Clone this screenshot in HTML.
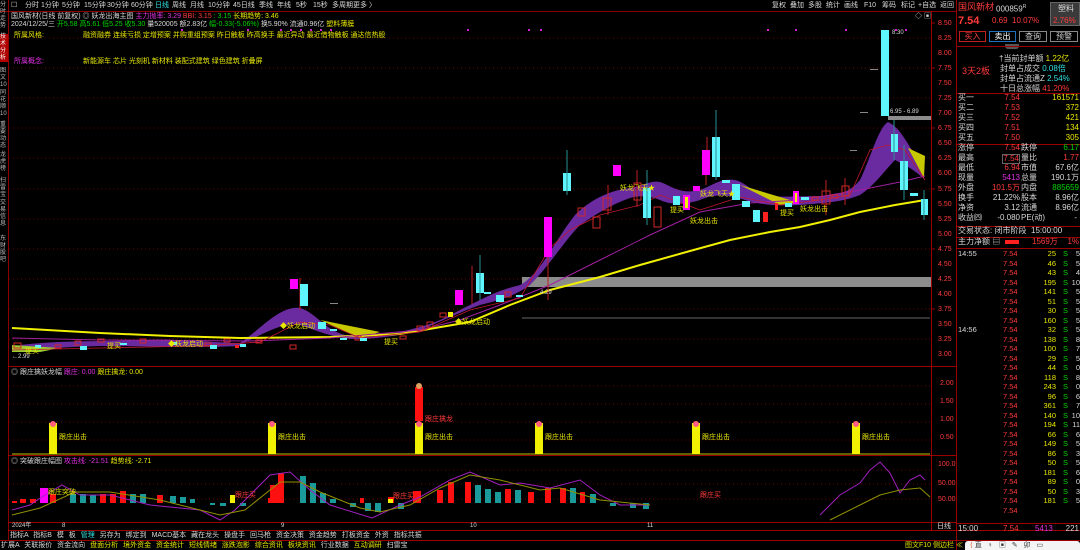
<!DOCTYPE html>
<html><head><meta charset="utf-8">
<style>
*{margin:0;padding:0;box-sizing:border-box}
body{width:1080px;height:550px;background:#000;overflow:hidden;position:relative;font-family:"Liberation Sans","Noto Sans CJK SC",sans-serif;font-size:7px;color:#c8c8c8}
.a{position:absolute;white-space:nowrap;line-height:1}
.y{color:#e6e600}.r{color:#ff3a3a}.g{color:#00d400}.m{color:#e030e0}.c{color:#30e0e0}.w{color:#d8d8d8}
.rp{position:absolute;left:957px;width:123px;font-size:8px}
.row{position:absolute;left:0;width:123px;height:10px;line-height:10px;white-space:nowrap}
.row span{position:absolute}
.mv{right:60px}
.l2{left:64px}
</style></head><body>
<svg width="1080" height="550" style="position:absolute;left:0;top:0">
<rect x="0" y="0" width="8" height="550" fill="#000"/>
<line x1="8.5" y1="0" x2="8.5" y2="540" stroke="#8a0000"/>
<line x1="0" y1="11.5" x2="957" y2="11.5" stroke="#8a0000"/>
<line x1="931.5" y1="11" x2="931.5" y2="530" stroke="#9a0000"/>
<line x1="956.5" y1="0" x2="956.5" y2="550" stroke="#9a0000"/>
<line x1="8" y1="366.5" x2="956" y2="366.5" stroke="#9a0000"/>
<line x1="8" y1="455.5" x2="956" y2="455.5" stroke="#9a0000"/>
<line x1="8" y1="522.5" x2="956" y2="522.5" stroke="#9a0000"/>
<line x1="8" y1="530.5" x2="1080" y2="530.5" stroke="#9a0000"/>
<line x1="0" y1="540.5" x2="1080" y2="540.5" stroke="#9a0000"/>
<g stroke="#6a0000" stroke-dasharray="1 3">
<line x1="9" y1="38" x2="930" y2="38"/><line x1="9" y1="68" x2="930" y2="68"/><line x1="9" y1="98" x2="930" y2="98"/><line x1="9" y1="128" x2="930" y2="128"/><line x1="9" y1="158" x2="930" y2="158"/><line x1="9" y1="189" x2="930" y2="189"/><line x1="9" y1="219" x2="930" y2="219"/><line x1="9" y1="249" x2="930" y2="249"/><line x1="9" y1="279" x2="930" y2="279"/><line x1="9" y1="309" x2="930" y2="309"/><line x1="9" y1="339" x2="930" y2="339"/>
<line x1="9" y1="386" x2="930" y2="386"/><line x1="9" y1="404" x2="930" y2="404"/><line x1="9" y1="422" x2="930" y2="422"/><line x1="9" y1="440" x2="930" y2="440"/>
<line x1="9" y1="470" x2="930" y2="470"/><line x1="9" y1="484" x2="930" y2="484"/><line x1="9" y1="499" x2="930" y2="499"/>
</g>
<g stroke="#9a0000">
<line x1="931" y1="23" x2="935" y2="23"/><line x1="931" y1="68" x2="935" y2="68"/><line x1="931" y1="128" x2="935" y2="128"/><line x1="931" y1="189" x2="935" y2="189"/><line x1="931" y1="249" x2="935" y2="249"/><line x1="931" y1="309" x2="935" y2="309"/>
</g>
<rect x="522" y="277" width="409" height="10" fill="#8c8c8c"/>
<rect x="888" y="116" width="43" height="4" fill="#8c8c8c"/>
<line x1="522" y1="318" x2="930" y2="318" stroke="#888" stroke-width="0.7"/>
<path d="M240,343 C260,330 280,305 300,308 C315,312 325,330 345,335 L360,336 C380,338 400,332 420,327 C440,322 455,312 470,305 C490,295 500,290 520,285 C540,275 555,240 575,215 C590,200 610,190 630,188 C640,187 650,180 660,182 C670,185 680,195 700,190 C712,186 720,178 735,180 C745,182 752,192 765,195 C780,198 800,196 820,196 C840,195 850,192 860,180 C870,160 878,128 888,122 C900,128 905,140 912,150 L925,180 C915,170 905,165 895,160 C885,170 875,185 860,195 C840,203 820,203 800,205 C780,206 760,205 745,200 C730,195 715,193 700,200 C685,205 670,205 660,200 C650,196 640,195 630,198 C610,205 595,215 580,225 C565,240 550,265 530,285 C515,296 500,300 480,305 C460,312 440,322 420,330 C400,336 380,338 360,339 C340,340 320,332 300,325 C285,322 270,330 240,345 Z" fill="#6a2aa0"/>
<path d="M20,345 C60,340 100,342 140,340 C180,338 210,343 240,343 L240,346 C200,348 150,346 100,346 C60,347 30,350 20,350Z" fill="#6a2aa0"/>
<path d="M320,320 L380,332 L360,338 Z" fill="#c8c800"/>
<path d="M740,185 L800,203 L780,205 Z" fill="#c8c800"/>
<path d="M908,148 L925,156 L924,178 Z" fill="#c8c800"/>
<path d="M12,345 L60,348 L40,352 L12,352Z" fill="#9acd32"/>
<polyline fill="none" stroke="#f0f000" stroke-width="2" points="12,328 100,333 170,336 240,338 330,337 400,334 470,322 510,305 550,290 600,277 640,265 690,251 730,240 770,232 800,227 830,220 860,212 895,205 925,200"/>
<polyline fill="none" stroke="#a020a0" stroke-width="1" points="12,338 100,340 250,341 330,338 420,330 460,320 500,305 550,285 600,260 650,235 700,212 750,203 800,200 860,190 900,182 925,176"/>
<polyline fill="none" stroke="#c01830" stroke-width="0.8" points="12,350 100,348 200,346 260,342 300,322 330,325 360,338 420,332 470,310 520,298 550,248 570,230 600,215 640,205 660,195 700,210 740,197 780,205 820,200 850,195 870,150 888,145 905,150 925,180"/>
<g stroke="#d02828" fill="none" stroke-width="1">
<rect x="14" y="343" width="7" height="5"/><rect x="55" y="345" width="6" height="3"/><rect x="75" y="341" width="6" height="4"/><rect x="98" y="339" width="6" height="3"/><rect x="140" y="339" width="6" height="4"/><rect x="205" y="343" width="6" height="3"/><rect x="224" y="339" width="6" height="3"/><rect x="256" y="340" width="6" height="3"/><rect x="290" y="345" width="6" height="4"/>
<rect x="355" y="336" width="6" height="4"/><rect x="400" y="336" width="6" height="3"/><rect x="417" y="326" width="6" height="5"/><rect x="427" y="322" width="6" height="5"/><rect x="440" y="313" width="6" height="4"/>
<rect x="505" y="292" width="6" height="5"/><rect x="578" y="208" width="7" height="8"/><rect x="593" y="217" width="7" height="11"/><rect x="603" y="198" width="8" height="12"/><rect x="634" y="183" width="7" height="17"/><rect x="654" y="207" width="7" height="20"/>
<rect x="812" y="197" width="6" height="3"/><rect x="822" y="191" width="8" height="13"/><rect x="832" y="195" width="6" height="3"/><rect x="842" y="186" width="7" height="10"/>
</g>
<g stroke="#c02020" stroke-width="1">
<line x1="300" y1="278" x2="300" y2="310"/><line x1="472" y1="266" x2="472" y2="304"/><line x1="548" y1="255" x2="548" y2="300"/><line x1="608" y1="185" x2="608" y2="215"/><line x1="637" y1="170" x2="637" y2="207"/><line x1="706" y1="168" x2="706" y2="185"/><line x1="707" y1="137" x2="707" y2="150"/><line x1="826" y1="180" x2="826" y2="215"/><line x1="845" y1="178" x2="845" y2="205"/>
</g>
<g fill="#ff00ff">
<rect x="290" y="279" width="8" height="10"/><rect x="455" y="290" width="8" height="15"/><rect x="544" y="217" width="8" height="40"/><rect x="613" y="165" width="8" height="11"/><rect x="702" y="150" width="8" height="25"/><rect x="693" y="186" width="7" height="5"/><rect x="683" y="195" width="7" height="15"/><rect x="793" y="191" width="6" height="13"/>
</g>
<rect x="685" y="197" width="3" height="11" fill="#f0f000"/><rect x="795" y="193" width="2" height="9" fill="#f0f000"/>
<rect x="448" y="312" width="5" height="5" fill="#f0f000"/>
<g fill="#5ff5ff">
<rect x="35" y="345" width="6" height="3"/><rect x="80" y="346" width="7" height="4"/><rect x="120" y="343" width="7" height="2"/><rect x="170" y="342" width="7" height="3"/><rect x="210" y="345" width="7" height="4"/><rect x="240" y="344" width="6" height="3"/>
<rect x="300" y="284" width="8" height="22"/><rect x="318" y="322" width="8" height="7"/><rect x="330" y="329" width="7" height="2"/><rect x="340" y="338" width="7" height="2"/><rect x="360" y="338" width="7" height="3"/>
<rect x="476" y="273" width="8" height="20"/><rect x="484" y="292" width="7" height="2"/><rect x="496" y="295" width="8" height="7"/><rect x="516" y="295" width="7" height="2"/>
<rect x="563" y="173" width="8" height="18"/><rect x="643" y="188" width="8" height="30"/><rect x="673" y="196" width="7" height="9"/><rect x="712" y="137" width="8" height="40"/><rect x="722" y="180" width="8" height="3"/><rect x="732" y="184" width="8" height="16"/><rect x="742" y="201" width="8" height="6"/><rect x="753" y="210" width="7" height="12"/><rect x="785" y="203" width="7" height="4"/><rect x="801" y="197" width="8" height="3"/>
<rect x="881" y="30" width="8" height="86"/><rect x="891" y="134" width="7" height="18"/><rect x="900" y="161" width="8" height="29"/><rect x="910" y="193" width="8" height="3"/><rect x="921" y="199" width="7" height="16"/>
</g>
<g stroke="#2a9090" stroke-width="1">
<line x1="567" y1="150" x2="567" y2="195"/><line x1="647" y1="170" x2="647" y2="225"/><line x1="716" y1="110" x2="716" y2="180"/><line x1="894" y1="120" x2="894" y2="160"/><line x1="904" y1="145" x2="904" y2="200"/><line x1="924" y1="190" x2="924" y2="220"/><line x1="480" y1="255" x2="480" y2="300"/>
</g>
<rect x="763" y="212" width="5" height="10" fill="#ff2020"/><rect x="775" y="203" width="3" height="7" fill="#ff2020"/><rect x="235" y="345" width="4" height="3" fill="#ff2020"/>
<g fill="#888"><rect x="330" y="303" width="8" height="1"/><rect x="870" y="69" width="8" height="1"/><rect x="860" y="112" width="8" height="1"/><rect x="850" y="150" width="7" height="1"/></g>
<g fill="#d020d0"><rect x="181" y="29" width="2" height="2"/><rect x="247" y="29" width="2" height="2"/><rect x="280" y="29" width="2" height="2"/><rect x="290" y="29" width="2" height="2"/><rect x="300" y="29" width="2" height="2"/><rect x="310" y="29" width="2" height="2"/><rect x="320" y="29" width="2" height="2"/><rect x="330" y="29" width="2" height="2"/><rect x="467" y="29" width="2" height="2"/><rect x="528" y="29" width="2" height="2"/><rect x="540" y="29" width="2" height="2"/><rect x="845" y="29" width="2" height="2"/><rect x="895" y="29" width="2" height="2"/><rect x="905" y="29" width="2" height="2"/><rect x="767" y="29" width="2" height="2"/><rect x="795" y="29" width="2" height="2"/></g>
<line x1="12" y1="454" x2="930" y2="454" stroke="#808000" stroke-width="1.5"/>
<g fill="#f0f000"><rect x="49" y="423" width="8" height="31"/><rect x="268" y="423" width="8" height="31"/><rect x="415" y="423" width="8" height="31"/><rect x="535" y="423" width="8" height="31"/><rect x="692" y="423" width="8" height="31"/><rect x="852" y="423" width="8" height="31"/></g>
<rect x="415" y="387" width="8" height="34" fill="#ff1010"/>
<g fill="#ff6080"><circle cx="53" cy="424" r="3"/><circle cx="272" cy="424" r="3"/><circle cx="419" cy="424" r="3"/><circle cx="539" cy="424" r="3"/><circle cx="696" cy="424" r="3"/><circle cx="856" cy="424" r="3"/></g>
<circle cx="419" cy="386" r="3" fill="#e0a060"/>
<g fill="#ff1010">
<rect x="12" y="501" width="5" height="2"/><rect x="20" y="499" width="6" height="4"/><rect x="30" y="499" width="6" height="4"/><rect x="50" y="494" width="6" height="9"/><rect x="100" y="494" width="6" height="9"/><rect x="110" y="494" width="6" height="9"/><rect x="120" y="491" width="6" height="12"/><rect x="157" y="495" width="6" height="8"/><rect x="268" y="498" width="6" height="5"/><rect x="270" y="485" width="8" height="18"/><rect x="278" y="473" width="6" height="30"/>
<rect x="360" y="498" width="4" height="5"/><rect x="388" y="497" width="6" height="6"/><rect x="413" y="491" width="8" height="12"/><rect x="437" y="490" width="6" height="13"/><rect x="448" y="482" width="6" height="21"/><rect x="465" y="482" width="6" height="21"/><rect x="505" y="489" width="6" height="14"/><rect x="528" y="492" width="6" height="11"/><rect x="545" y="488" width="6" height="15"/><rect x="560" y="488" width="6" height="15"/><rect x="580" y="492" width="5" height="11"/>
</g>
<g fill="#1a9a9a">
<rect x="70" y="494" width="6" height="9"/><rect x="80" y="494" width="6" height="9"/><rect x="90" y="495" width="6" height="8"/><rect x="130" y="494" width="6" height="9"/><rect x="140" y="494" width="6" height="9"/><rect x="170" y="496" width="6" height="7"/><rect x="180" y="497" width="6" height="6"/><rect x="190" y="499" width="5" height="4"/><rect x="210" y="503" width="5" height="2"/><rect x="220" y="503" width="6" height="3"/><rect x="240" y="503" width="6" height="3"/>
<rect x="300" y="476" width="6" height="27"/><rect x="310" y="483" width="6" height="20"/><rect x="320" y="493" width="6" height="10"/><rect x="330" y="499" width="6" height="4"/><rect x="350" y="503" width="6" height="4"/><rect x="365" y="503" width="6" height="8"/><rect x="375" y="503" width="6" height="9"/><rect x="398" y="503" width="6" height="6"/><rect x="475" y="485" width="6" height="18"/><rect x="485" y="489" width="6" height="14"/><rect x="495" y="492" width="6" height="11"/><rect x="515" y="490" width="6" height="13"/><rect x="570" y="488" width="6" height="15"/><rect x="590" y="494" width="6" height="9"/><rect x="610" y="503" width="6" height="3"/><rect x="630" y="503" width="6" height="5"/><rect x="643" y="503" width="6" height="6"/>
</g>
<rect x="40" y="488" width="8" height="15" fill="#ff00ff"/><rect x="230" y="495" width="5" height="8" fill="#f0f000"/><rect x="388" y="499" width="5" height="4" fill="#f0f000"/>
<polyline fill="none" stroke="#a020c0" stroke-width="1" points="12,510 30,505 45,495 62,485 80,495 110,495 150,505 200,510 220,520 235,510 270,475 290,472 310,490 330,505 372,518 400,505 420,497 450,480 470,472 500,485 520,483 550,488 580,480 600,495 620,505 650,505"/>
<polyline fill="none" stroke="#909000" stroke-width="1" points="12,515 40,508 75,492 110,492 160,500 220,515 245,510 280,482 300,482 320,492 360,508 380,512 410,505 440,488 470,475 500,480 540,490 560,488 600,500 650,505"/>
<polyline fill="none" stroke="#a020c0" stroke-width="1" points="820,515 840,495 860,483 870,470 880,462 890,473 900,493 910,480 920,475 925,480"/>
<polyline fill="none" stroke="#909000" stroke-width="1" points="830,520 860,505 880,495 900,490 920,488 930,497"/>
</svg>

<div class="a" style="left:0;top:2px;width:8px;font-size:6px;line-height:7px;white-space:normal;color:#bbb">分时走势</div>
<div class="a" style="left:0;top:34px;width:8px;height:28px;background:#b00000;font-size:6px;line-height:7px;white-space:normal;color:#fff">技术分析</div>
<div class="a" style="left:0;top:68px;width:8px;font-size:6px;line-height:7px;white-space:normal;color:#bbb">图文10</div>
<div class="a" style="left:0;top:90px;width:8px;font-size:6px;line-height:7px;white-space:normal;color:#bbb">同花顺10</div>
<div class="a" style="left:0;top:122px;width:8px;font-size:6px;line-height:7px;white-space:normal;color:#bbb">重要动态</div>
<div class="a" style="left:0;top:152px;width:8px;font-size:6px;line-height:7px;white-space:normal;color:#bbb">龙虎榜</div>
<div class="a" style="left:0;top:178px;width:8px;font-size:6px;line-height:7px;white-space:normal;color:#bbb">扫雷宝</div>
<div class="a" style="left:0;top:200px;width:8px;font-size:6px;line-height:7px;white-space:normal;color:#bbb">交易信息</div>
<div class="a" style="left:0;top:236px;width:8px;font-size:6px;line-height:7px;white-space:normal;color:#bbb">东财股吧</div>

<div class="a w" style="left:11px;top:2px;font-size:7px">☐</div>
<div class="a w" style="top:2px;left:25px">分时</div>
<div class="a w" style="top:2px;left:41px">1分钟</div><div class="a w" style="top:2px;left:62px">5分钟</div><div class="a w" style="top:2px;left:84px">15分钟</div><div class="a w" style="top:2px;left:107px">30分钟</div><div class="a w" style="top:2px;left:131px">60分钟</div><div class="a c" style="top:2px;left:155px">日线</div><div class="a w" style="top:2px;left:172px">周线</div><div class="a w" style="top:2px;left:190px">月线</div><div class="a w" style="top:2px;left:208px">10分钟</div><div class="a w" style="top:2px;left:233px">45日线</div><div class="a w" style="top:2px;left:259px">季线</div><div class="a w" style="top:2px;left:277px">年线</div><div class="a w" style="top:2px;left:296px">5秒</div><div class="a w" style="top:2px;left:313px">15秒</div><div class="a w" style="top:2px;left:332px">多周期</div><div class="a w" style="top:2px;left:353px">更多 〉</div>
<div class="a w" style="top:2px;left:772px">复权</div><div class="a w" style="top:2px;left:790px">叠加</div><div class="a w" style="top:2px;left:808px">多股</div><div class="a w" style="top:2px;left:826px">统计</div><div class="a w" style="top:2px;left:844px">画线</div><div class="a w" style="top:2px;left:864px">F10</div><div class="a w" style="top:2px;left:882px">筹码</div><div class="a w" style="top:2px;left:901px">标记</div><div class="a w" style="top:2px;left:918px">+自选</div><div class="a w" style="top:2px;left:940px">返回</div>

<div class="a w" style="left:11px;top:13px">国风新材(日线 前复权) ◎ 妖龙出海主图 <span class="m">主力抛率: 3.29</span> <span class="r">BBI: 3.15</span> <span class="g">: 3.15</span> <span class="y">长期趋势: 3.46</span></div>
<div class="a w" style="left:11px;top:21px">2024/12/25/三 <span class="g">开5.58 高5.61 低5.25 收5.30</span> 量520005 额2.83亿 <span class="g">幅-0.33(-5.06%)</span> 换5.90% 流通0.96亿 <span class="y">塑料薄膜</span></div>
<div class="a y" style="left:14px;top:32px">所属风格:</div>
<div class="a y" style="left:83px;top:32px">融资融券 连续亏损 定增预案 并购重组预案 昨日触板 昨高换手 最近异动 最近借物触板 通达信热股</div>
<div class="a m" style="left:14px;top:58px">所属概念:</div>
<div class="a y" style="left:83px;top:58px">新能源车 芯片 光刻机 新材料 装配式建筑 绿色建筑 折叠屏</div>

<div class="a y" style="left:280px;top:323px">◆妖龙启动</div>
<div class="a y" style="left:168px;top:341px">◆妖龙启动</div>
<div class="a y" style="left:455px;top:319px">◆妖龙启动</div>
<div class="a y" style="left:620px;top:185px">妖龙飞天★</div>
<div class="a y" style="left:700px;top:191px">妖龙飞天★</div>
<div class="a y" style="left:690px;top:218px">妖龙出击</div>
<div class="a y" style="left:800px;top:206px">妖龙出击</div>
<div class="a y" style="left:25px;top:348px">提买</div>
<div class="a y" style="left:107px;top:343px">提买</div>
<div class="a y" style="left:384px;top:339px">提买</div>
<div class="a y" style="left:670px;top:207px">提买</div>
<div class="a y" style="left:780px;top:210px">提买</div>
<div class="a w" style="left:12px;top:354px;font-size:6px">←2.99</div>
<div class="a w" style="left:540px;top:290px;font-size:6px">4.29</div>
<div class="a w" style="left:890px;top:109px;font-size:6px">6.95 - 6.89</div>
<div class="a w" style="left:892px;top:30px;font-size:6px">8.30</div>
<div class="a w" style="left:915px;top:13px">◇ ▣</div>

<div class="a r" style="left:938px;top:20px">8.50</div><div class="a r" style="left:938px;top:35px">8.25</div><div class="a r" style="left:938px;top:50px">8.00</div><div class="a r" style="left:938px;top:65px">7.75</div><div class="a r" style="left:938px;top:80px">7.50</div><div class="a r" style="left:938px;top:95px">7.25</div><div class="a r" style="left:938px;top:110px">7.00</div><div class="a r" style="left:938px;top:125px">6.75</div><div class="a r" style="left:938px;top:140px">6.50</div><div class="a r" style="left:938px;top:155px">6.25</div><div class="a r" style="left:938px;top:170px">6.00</div><div class="a r" style="left:938px;top:186px">5.75</div><div class="a r" style="left:938px;top:201px">5.50</div><div class="a r" style="left:938px;top:216px">5.25</div><div class="a r" style="left:938px;top:231px">5.00</div><div class="a r" style="left:938px;top:246px">4.75</div><div class="a r" style="left:938px;top:261px">4.50</div><div class="a r" style="left:938px;top:276px">4.25</div><div class="a r" style="left:938px;top:291px">4.00</div><div class="a r" style="left:938px;top:306px">3.75</div><div class="a r" style="left:938px;top:321px">3.50</div><div class="a r" style="left:938px;top:336px">3.25</div><div class="a r" style="left:938px;top:351px">3.00</div>
<div class="a r" style="left:940px;top:380px">2.00</div><div class="a r" style="left:940px;top:398px">1.50</div><div class="a r" style="left:940px;top:416px">1.00</div><div class="a r" style="left:940px;top:434px">0.50</div>
<div class="a r" style="left:938px;top:461px">100.0</div><div class="a r" style="left:938px;top:480px">50.00</div><div class="a r" style="left:938px;top:496px">50.00</div>

<div class="a w" style="left:11px;top:369px">◎ 跟庄擒妖龙幅 <span class="m">跟庄: 0.00</span> <span class="y">跟庄擒龙: 0.00</span></div>
<div class="a y" style="left:59px;top:434px">跟庄出击</div><div class="a y" style="left:278px;top:434px">跟庄出击</div><div class="a y" style="left:425px;top:434px">跟庄出击</div><div class="a r" style="left:425px;top:416px">跟庄擒龙</div><div class="a y" style="left:545px;top:434px">跟庄出击</div><div class="a y" style="left:702px;top:434px">跟庄出击</div><div class="a y" style="left:862px;top:434px">跟庄出击</div>
<div class="a w" style="left:11px;top:458px">◎ 突破跟庄幅图 <span class="m">攻击线: -21.51</span> <span class="y">趋势线: -2.71</span></div>
<div class="a y" style="left:48px;top:489px">跟庄突破</div><div class="a r" style="left:235px;top:492px">跟庄买</div><div class="a r" style="left:393px;top:493px">跟庄买</div><div class="a r" style="left:700px;top:492px">跟庄买</div>

<div class="a w" style="left:12px;top:523px;font-size:6px">2024年</div><div class="a w" style="left:62px;top:523px;font-size:6px">8</div><div class="a w" style="left:281px;top:523px;font-size:6px">9</div><div class="a w" style="left:470px;top:523px;font-size:6px">10</div><div class="a w" style="left:647px;top:523px;font-size:6px">11</div>
<div class="a w" style="left:937px;top:523px">日线</div>

<div class="a w" style="left:10px;top:532px;word-spacing:3px">指标A 指标B 模 板 <span class="c">管理</span> 另存为 绑定到 MACD基本 藏在龙头 操盘手 回马枪 资金决策 资金趋势 打板资金 外资 指标共振</div>
<div class="a w" style="left:1px;top:542px;word-spacing:3px">扩展A 关联报价 资金流向 <span class="y">盘面分析 境外资金 资金统计 短线情绪 涨跌泡影</span> <span class="y">综合资讯</span> <span class="y">板块资讯</span> 行业数据 <span class="y">互动调研</span> 扫雷宝</div>
<div class="a y" style="left:905px;top:542px">图文F10 侧边栏 ≪</div>
<div class="a" style="left:965px;top:541px;width:115px;height:9px;background:#f4f4f4;border-radius:3px 3px 0 0"></div>
<div class="a" style="left:970px;top:542px;color:#e05020">⟨ <span style="color:#333;word-spacing:4px">直 ♀ ▣ ✎ 卯 ▭</span></div>

<div class="rp" style="top:0;height:550px">
<div class="row" style="top:2px"><span class="r" style="left:1px;font-size:9px">国风新材</span><span class="w" style="left:39px;font-size:8px">000859<sup style="font-size:5px">R</sup></span></div>
<div class="a" style="left:93px;top:2px;width:30px;height:24px;background:#3a3a3a;border:1px solid #666"></div>
<div class="a w" style="left:101px;top:5px;font-size:8px">塑料</div>
<div class="a r" style="left:96px;top:17px">2.76%</div>
<div class="row" style="top:16px"><span class="r" style="left:1px;font-size:11px;font-weight:bold">7.54</span><span class="r" style="left:35px">0.69</span><span class="r" style="left:55px">10.07%</span></div>
<div class="a" style="left:2px;top:31px;width:27px;height:11px;border:1px solid #c02020;color:#ff4040;text-align:center;line-height:9px">买入</div>
<div class="a" style="left:32px;top:31px;width:27px;height:11px;border:1px solid #2070c0;color:#fff;text-align:center;line-height:9px">卖出</div>
<div class="a" style="left:62px;top:31px;width:28px;height:11px;border:1px solid #888;color:#ccc;text-align:center;line-height:9px">查询</div>
<div class="a" style="left:93px;top:31px;width:28px;height:11px;border:1px solid #888;color:#ccc;text-align:center;line-height:9px">预警</div>
<div class="a" style="left:48px;top:44px;width:14px;height:5px;background:#555;border-radius:0 0 3px 3px"></div>
<div class="a" style="left:0;top:45.5px;width:123px;height:1px;background:#9a0000"></div>
<div class="a r" style="left:5px;top:67px;font-size:9px">3天2板</div>
<div class="a w" style="left:42px;top:55px">†当前封单额 <span class="y">1.22亿</span></div>
<div class="a w" style="left:43px;top:65px">封单占成交 <span class="c">0.08倍</span></div>
<div class="a w" style="left:43px;top:75px">封单占流通Z <span class="c">2.54%</span></div>
<div class="a w" style="left:43px;top:85px">十日总涨幅 <span class="r">41.20%</span></div>
<div class="a" style="left:0;top:92.5px;width:123px;height:1px;background:#9a0000"></div>
<div class="row" style="top:93px"><span class="w" style="left:1px">买一</span><span class="r mv">7.54</span><span class="y" style="right:1px">161571</span></div>
<div class="row" style="top:103px"><span class="w" style="left:1px">买二</span><span class="r mv">7.53</span><span class="y" style="right:1px">372</span></div>
<div class="row" style="top:113px"><span class="w" style="left:1px">买三</span><span class="r mv">7.52</span><span class="y" style="right:1px">421</span></div>
<div class="row" style="top:123px"><span class="w" style="left:1px">买四</span><span class="r mv">7.51</span><span class="y" style="right:1px">134</span></div>
<div class="row" style="top:133px"><span class="w" style="left:1px">买五</span><span class="r mv">7.50</span><span class="y" style="right:1px">305</span></div>
<div class="a" style="left:0;top:143.5px;width:123px;height:1px;background:#9a0000"></div>
<div class="row" style="top:143px"><span class="w" style="left:1px">涨停</span><span class="r mv">7.54</span><span class="w l2">跌停</span><span class="g" style="right:1px">6.17</span></div>
<div class="row" style="top:153px"><span class="w" style="left:1px">最高</span><span class="r mv" style="border:1px solid #666;line-height:8px;top:1px">7.54</span><span class="w l2">量比</span><span class="r" style="right:1px">1.77</span></div>
<div class="row" style="top:163px"><span class="w" style="left:1px">最低</span><span class="r mv">6.94</span><span class="w l2">市值</span><span class="w" style="right:1px">67.6亿</span></div>
<div class="row" style="top:173px"><span class="w" style="left:1px">现量</span><span class="m mv">5413</span><span class="w l2">总量</span><span class="w" style="right:1px">190.1万</span></div>
<div class="row" style="top:183px"><span class="w" style="left:1px">外盘</span><span class="r mv">101.5万</span><span class="w l2">内盘</span><span class="g" style="right:1px">885659</span></div>
<div class="row" style="top:193px"><span class="w" style="left:1px">换手</span><span class="w mv">21.22%</span><span class="w l2">股本</span><span class="w" style="right:1px">8.96亿</span></div>
<div class="row" style="top:203px"><span class="w" style="left:1px">净资</span><span class="w mv">3.12</span><span class="w l2">流通</span><span class="w" style="right:1px">8.96亿</span></div>
<div class="row" style="top:213px"><span class="w" style="left:1px">收益㈣</span><span class="w mv">-0.080</span><span class="w l2">PE(动)</span><span class="w" style="right:3px">-</span></div>
<div class="a" style="left:0;top:225.5px;width:123px;height:1px;background:#9a0000"></div>
<div class="row" style="top:226px"><span class="w" style="left:1px">交易状态: 闭市阶段</span><span class="w" style="left:74px">15:00:00</span></div>
<div class="a" style="left:0;top:236.5px;width:123px;height:1px;background:#9a0000"></div>
<div class="row" style="top:237px"><span class="w" style="left:1px">主力净额 ▤</span><span style="left:48px;top:3px;width:14px;height:4px;background:#ff2020"></span><span class="r" style="left:75px">1569万</span><span class="r" style="right:1px">1%</span></div>
<div class="a" style="left:0;top:247.5px;width:123px;height:1px;background:#9a0000"></div>
<div class="a" style="left:0;top:522.5px;width:123px;height:1px;background:#9a0000"></div>
<div class="row" style="top:524px"><span class="w" style="left:1px">15:00</span><span class="r" style="left:46px">7.54</span><span class="m" style="left:78px">5413</span><span class="w" style="right:1px">221</span></div>
</div>
<div class="rp" style="top:249px;height:275px;font-size:7.5px">
<div class="row" style="top:0"><span class="w" style="left:1px">14:55</span><span class="r" style="left:46px">7.54</span><span class="y" style="right:24px">25</span><span class="g" style="right:12px">S</span><span class="w" style="right:0">5</span></div>
<div class="row" style="top:9.5px"><span class="r" style="left:46px">7.54</span><span class="y" style="right:24px">46</span><span class="g" style="right:12px">S</span><span class="w" style="right:0">5</span></div>
<div class="row" style="top:19px"><span class="r" style="left:46px">7.54</span><span class="y" style="right:24px">43</span><span class="g" style="right:12px">S</span><span class="w" style="right:0">4</span></div>
<div class="row" style="top:28.5px"><span class="r" style="left:46px">7.54</span><span class="y" style="right:24px">195</span><span class="g" style="right:12px">S</span><span class="w" style="right:0">10</span></div>
<div class="row" style="top:38px"><span class="r" style="left:46px">7.54</span><span class="y" style="right:24px">141</span><span class="g" style="right:12px">S</span><span class="w" style="right:0">5</span></div>
<div class="row" style="top:47.5px"><span class="r" style="left:46px">7.54</span><span class="y" style="right:24px">51</span><span class="g" style="right:12px">S</span><span class="w" style="right:0">5</span></div>
<div class="row" style="top:57px"><span class="r" style="left:46px">7.54</span><span class="y" style="right:24px">30</span><span class="g" style="right:12px">S</span><span class="w" style="right:0">5</span></div>
<div class="row" style="top:66.5px"><span class="r" style="left:46px">7.54</span><span class="y" style="right:24px">160</span><span class="g" style="right:12px">S</span><span class="w" style="right:0">5</span></div>
<div class="row" style="top:76px"><span class="w" style="left:1px">14:56</span><span class="r" style="left:46px">7.54</span><span class="y" style="right:24px">32</span><span class="g" style="right:12px">S</span><span class="w" style="right:0">5</span></div>
<div class="row" style="top:85.5px"><span class="r" style="left:46px">7.54</span><span class="y" style="right:24px">138</span><span class="g" style="right:12px">S</span><span class="w" style="right:0">8</span></div>
<div class="row" style="top:95px"><span class="r" style="left:46px">7.54</span><span class="y" style="right:24px">100</span><span class="g" style="right:12px">S</span><span class="w" style="right:0">7</span></div>
<div class="row" style="top:104.5px"><span class="r" style="left:46px">7.54</span><span class="y" style="right:24px">29</span><span class="g" style="right:12px">S</span><span class="w" style="right:0">5</span></div>
<div class="row" style="top:114px"><span class="r" style="left:46px">7.54</span><span class="y" style="right:24px">44</span><span class="g" style="right:12px">S</span><span class="w" style="right:0">0</span></div>
<div class="row" style="top:123.5px"><span class="r" style="left:46px">7.54</span><span class="y" style="right:24px">118</span><span class="g" style="right:12px">S</span><span class="w" style="right:0">8</span></div>
<div class="row" style="top:133px"><span class="r" style="left:46px">7.54</span><span class="y" style="right:24px">243</span><span class="g" style="right:12px">S</span><span class="w" style="right:0">0</span></div>
<div class="row" style="top:142.5px"><span class="r" style="left:46px">7.54</span><span class="y" style="right:24px">96</span><span class="g" style="right:12px">S</span><span class="w" style="right:0">6</span></div>
<div class="row" style="top:152px"><span class="r" style="left:46px">7.54</span><span class="y" style="right:24px">361</span><span class="g" style="right:12px">S</span><span class="w" style="right:0">7</span></div>
<div class="row" style="top:161.5px"><span class="r" style="left:46px">7.54</span><span class="y" style="right:24px">140</span><span class="g" style="right:12px">S</span><span class="w" style="right:0">10</span></div>
<div class="row" style="top:171px"><span class="r" style="left:46px">7.54</span><span class="y" style="right:24px">194</span><span class="g" style="right:12px">S</span><span class="w" style="right:0">11</span></div>
<div class="row" style="top:180.5px"><span class="r" style="left:46px">7.54</span><span class="y" style="right:24px">66</span><span class="g" style="right:12px">S</span><span class="w" style="right:0">6</span></div>
<div class="row" style="top:190px"><span class="r" style="left:46px">7.54</span><span class="y" style="right:24px">149</span><span class="g" style="right:12px">S</span><span class="w" style="right:0">5</span></div>
<div class="row" style="top:199.5px"><span class="r" style="left:46px">7.54</span><span class="y" style="right:24px">86</span><span class="g" style="right:12px">S</span><span class="w" style="right:0">3</span></div>
<div class="row" style="top:209px"><span class="r" style="left:46px">7.54</span><span class="y" style="right:24px">50</span><span class="g" style="right:12px">S</span><span class="w" style="right:0">5</span></div>
<div class="row" style="top:218.5px"><span class="r" style="left:46px">7.54</span><span class="y" style="right:24px">181</span><span class="g" style="right:12px">S</span><span class="w" style="right:0">6</span></div>
<div class="row" style="top:228px"><span class="r" style="left:46px">7.54</span><span class="y" style="right:24px">89</span><span class="g" style="right:12px">S</span><span class="w" style="right:0">0</span></div>
<div class="row" style="top:237.5px"><span class="r" style="left:46px">7.54</span><span class="y" style="right:24px">50</span><span class="g" style="right:12px">S</span><span class="w" style="right:0">3</span></div>
<div class="row" style="top:247px"><span class="r" style="left:46px">7.54</span><span class="y" style="right:24px">181</span><span class="g" style="right:12px">S</span><span class="w" style="right:0">5</span></div>
<div class="row" style="top:256.5px"><span class="r" style="left:46px">7.54</span></div>
</div>
</body></html>
